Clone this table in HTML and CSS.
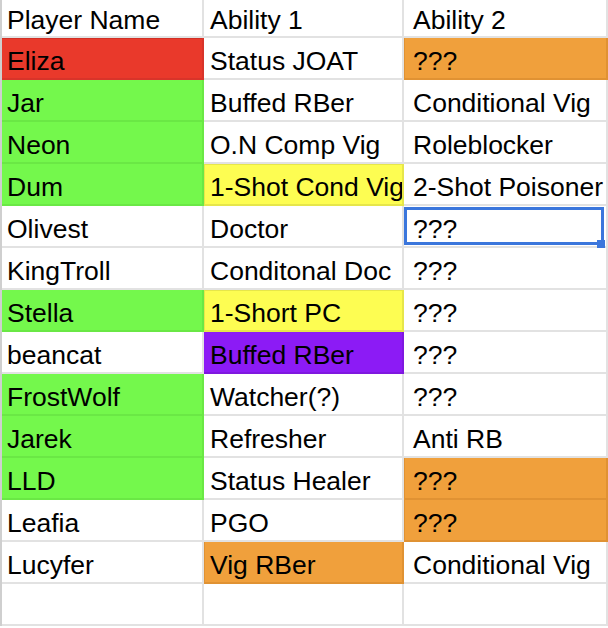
FILE: index.html
```html
<!DOCTYPE html>
<html>
<head>
<meta charset="utf-8">
<link rel="stylesheet" href="styles.css">
</head>
<body>
<div class="sheet">
  <div class="row head"><div class="c c1">Player Name</div><div class="c c2">Ability 1</div><div class="c c3">Ability 2</div></div>
  <div class="row"><div class="c c1 red">Eliza</div><div class="c c2">Status JOAT</div><div class="c c3 orange">???</div></div>
  <div class="row"><div class="c c1 green">Jar</div><div class="c c2">Buffed RBer</div><div class="c c3">Conditional Vig</div></div>
  <div class="row"><div class="c c1 green">Neon</div><div class="c c2">O.N Comp Vig</div><div class="c c3">Roleblocker</div></div>
  <div class="row"><div class="c c1 green">Dum</div><div class="c c2 yellow">1-Shot Cond Vig</div><div class="c c3">2-Shot Poisoner</div></div>
  <div class="row"><div class="c c1">Olivest</div><div class="c c2">Doctor</div><div class="c c3 sel">???<span class="handle"></span></div></div>
  <div class="row"><div class="c c1">KingTroll</div><div class="c c2">Conditonal Doc</div><div class="c c3">???</div></div>
  <div class="row"><div class="c c1 green">Stella</div><div class="c c2 yellow">1-Short PC</div><div class="c c3">???</div></div>
  <div class="row"><div class="c c1">beancat</div><div class="c c2 purple">Buffed RBer</div><div class="c c3">???</div></div>
  <div class="row"><div class="c c1 green">FrostWolf</div><div class="c c2">Watcher(?)</div><div class="c c3">???</div></div>
  <div class="row"><div class="c c1 green">Jarek</div><div class="c c2">Refresher</div><div class="c c3">Anti RB</div></div>
  <div class="row"><div class="c c1 green">LLD</div><div class="c c2">Status Healer</div><div class="c c3 orange">???</div></div>
  <div class="row"><div class="c c1">Leafia</div><div class="c c2">PGO</div><div class="c c3 orange">???</div></div>
  <div class="row"><div class="c c1">Lucyfer</div><div class="c c2 orange">Vig RBer</div><div class="c c3">Conditional Vig</div></div>
  <div class="row"><div class="c c1"></div><div class="c c2"></div><div class="c c3"></div></div>
</div>
</body>
</html>
```

FILE: styles.css
```css
html, body {
  margin: 0;
  padding: 0;
  background: #ffffff;
}
body {
  width: 608px;
  height: 628px;
  overflow: hidden;
  font-family: "Liberation Sans", Arial, sans-serif;
  color: #000000;
}
.sheet {
  width: 606px;
  border-left: 2px solid #cfcfcf;
  display: flex;
  flex-direction: column;
}
.row {
  display: grid;
  grid-template-columns: 202px 200px 204px;
  grid-template-rows: 42px;
  height: 42px;
}
.row.head {
  grid-template-rows: 38px;
  height: 38px;
}
.c {
  box-sizing: border-box;
  height: 100%;
  border-right: 2px solid #e2e2e2;
  border-bottom: 2px solid #e2e2e2;
  font-size: 26.5px;
  line-height: 47px;
  white-space: nowrap;
  overflow: hidden;
  position: relative;
}
.head .c {
  line-height: 40px;
}
.c1 { padding-left: 5px; }
.c2 { padding-left: 6px; }
.c3 { padding-left: 9px; }
.sel { overflow: visible; }

.red {
  background: #e9392b;
  border-color: #d8342a;
  box-shadow: inset 0 1px 0 #d02f25;
}
.green {
  background: #74f84c;
  border-color: #6ae845;
}
.orange {
  background: #f0a03c;
  border-color: #e09233;
  box-shadow: inset 1px 0 0 #e09233;
}
.yellow {
  background: #fdfd52;
  border-color: #e6e64a;
  box-shadow: inset 1px 1px 0 #e6e64a;
}
.purple {
  background: #8c1bf5;
  border-color: #7f18df;
}
.sel::after {
  content: "";
  position: absolute;
  left: 0;
  top: 1px;
  right: 2px;
  bottom: 1px;
  border: 3px solid #3b76dc;
  pointer-events: none;
}
.handle {
  position: absolute;
  right: 1px;
  bottom: -2px;
  width: 8px;
  height: 8px;
  background: #3b76dc;
  z-index: 2;
}
```
